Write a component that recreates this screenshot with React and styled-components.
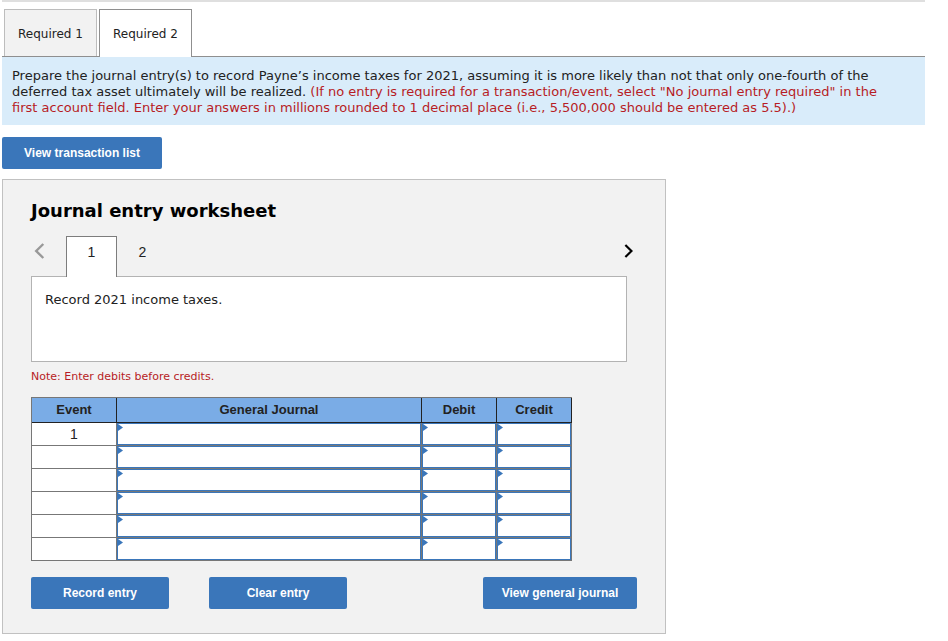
import React, { useState } from "react";
import styled, { createGlobalStyle } from "styled-components";

const GlobalStyle = createGlobalStyle`
  *, *::before, *::after { box-sizing: border-box; }
  body {
    margin: 0;
    background: #fff;
    color: #222;
    font: 13px/16px Verdana, "DejaVu Sans", sans-serif;
  }
  button, input { font: inherit; color: inherit; }
`;

const Page = styled.main`
  padding: 0 23px 7px 2px;
`;

const TabBar = styled.div`
  display: flex;
  align-items: flex-end;
  gap: 2px;
  padding: 7px 2px 0;
  border-top: 2px solid #dfdfdf;
  border-bottom: 1px solid #8f8f8f;
`;

const Tab = styled.button`
  width: 93px;
  height: ${(p) => (p.$active ? 48 : 47)}px;
  margin-bottom: ${(p) => (p.$active ? -1 : 0)}px;
  padding: ${(p) => (p.$active ? 0 : 1)}px 0 0;
  border: 1px solid ${(p) => (p.$active ? "#8f8f8f" : "#bdbdbd")};
  border-bottom: 0;
  background: ${(p) => (p.$active ? "#fff" : "#f2f2f2")};
  font-size: 12px;
  white-space: nowrap;
  cursor: pointer;
`;

const Instructions = styled.p`
  margin: 0 0 12px;
  padding: 11px 32px 9px 10px;
  background: #d9ecfa;
`;

const Hint = styled.span`
  color: #b71c25;
`;

const ActionButton = styled.button`
  width: ${(p) => p.$width}px;
  height: 32px;
  padding: 0;
  border: 0;
  border-radius: 2px;
  background: #3a76ba;
  color: #fff;
  font: bold 12px/16px Arial, "Liberation Sans", sans-serif;
  white-space: nowrap;
  cursor: pointer;
`;

const Worksheet = styled.section`
  max-width: 664px;
  margin-top: 10px;
  padding: 20px 28px 24px;
  border: 1px solid #c1c1c1;
  background: #f2f2f2;
`;

const Title = styled.h2`
  margin: 0 0 14px;
  color: #000;
  font-size: 18px;
  line-height: 22px;
`;

const Pager = styled.div`
  display: flex;
  height: 40px;
`;

const Arrow = styled.button`
  display: flex;
  align-items: center;
  width: 35px;
  height: 30px;
  padding: 0 3px;
  border: 0;
  background: none;
  color: ${(p) => (p.$forward ? "#000" : "#999")};
  ${(p) => p.$forward && "width: 16px; margin-left: auto;"}
`;

const EntryTab = styled.button`
  position: relative;
  width: 51px;
  height: 41px;
  padding: 0 0 10px;
  border: 1px solid ${(p) => (p.$active ? "#7d7d7d" : "transparent")};
  border-bottom: 0;
  background: ${(p) => (p.$active ? "#fff" : "transparent")};
  font: 14px/16px Arial, "Liberation Sans", sans-serif;
  cursor: pointer;
`;

const Description = styled.div`
  max-width: 596px;
  height: 86px;
  padding: 15px 13px;
  border: 1px solid #b3b3b3;
  background: #fff;
`;

const Note = styled.p`
  margin: 7px 0 12px;
  color: #b71c25;
  font-size: 11px;
`;

const Journal = styled.table`
  width: 541px;
  max-width: 100%;
  table-layout: fixed;
  border-collapse: separate;
  border-spacing: 0;
  border: solid #777;
  border-width: 1px 0 0 1px;
  background: #fff;
  font: 14px/16px Arial, "Liberation Sans", sans-serif;
`;

const Column = styled.col`
  width: ${(p) => (p.$width ? `${p.$width}px` : "auto")};
`;

const HeadCell = styled.th`
  height: 25px;
  padding: 0;
  border: solid #222;
  border-width: 0 1px 1px 0;
  background: #7aace6;
  font-size: 13px;
`;

const Cell = styled.td`
  position: relative;
  height: 23px;
  padding: 0;
  border: solid #777;
  border-width: 0 1px 1px 0;
  text-align: center;
`;

const Field = styled.input`
  display: block;
  width: 100%;
  height: 22px;
  padding: 0 8px;
  border: 1px solid #3a76ba;
  border-radius: 0;
  background: #fff;
  outline: 0;
`;

const Marker = styled.svg`
  position: absolute;
  top: 1px;
  left: 1px;
`;

const Actions = styled.div`
  display: flex;
  gap: 40px;
  margin-top: 16px;
  & > :last-child { margin-left: auto; }
`;

const headings = ["Event", "General Journal", "Debit", "Credit"];

function Chevron({ forward }) {
  return (
    <svg width="11" height="16" viewBox="0 0 11 16" fill="none" stroke="currentColor" strokeWidth="2.4" aria-hidden="true">
      <path d={forward ? "M1.5 1.3 8.2 8l-6.7 6.7" : "M9.3 1 2.2 8l7.1 7"} />
    </svg>
  );
}

export default function App() {
  const [required, setRequired] = useState(2);
  const [entry, setEntry] = useState(1);

  return (
    <>
      <GlobalStyle />
      <Page>
        <TabBar role="tablist">
          {[1, 2].map((n) => (
            <Tab key={n} role="tab" aria-selected={required === n} $active={required === n} onClick={() => setRequired(n)}>
              Required {n}
            </Tab>
          ))}
        </TabBar>
        <Instructions>
          Prepare the journal entry(s) to record Payne’s income taxes for 2021, assuming it is more likely than not that
          only one-fourth of the deferred tax asset ultimately will be realized.{" "}
          <Hint>
            (If no entry is required for a transaction/event, select "No journal entry required" in the first account
            field. Enter your answers in millions rounded to 1 decimal place (i.e., 5,500,000 should be entered as
            5.5).)
          </Hint>
        </Instructions>
        <ActionButton $width={160}>View transaction list</ActionButton>
        <Worksheet>
          <Title>Journal entry worksheet</Title>
          <Pager>
            <Arrow aria-label="Previous entry"><Chevron /></Arrow>
            {[1, 2].map((n) => (
              <EntryTab key={n} $active={entry === n} onClick={() => setEntry(n)}>{n}</EntryTab>
            ))}
            <Arrow $forward aria-label="Next entry"><Chevron forward /></Arrow>
          </Pager>
          <Description>Record 2021 income taxes.</Description>
          <Note>Note: Enter debits before credits.</Note>
          <Journal>
            <colgroup>
              <Column $width={85} />
              <Column />
              <Column $width={75} />
              <Column $width={75} />
            </colgroup>
            <thead>
              <tr>{headings.map((h) => <HeadCell key={h} scope="col">{h}</HeadCell>)}</tr>
            </thead>
            <tbody>
              {[1, 2, 3, 4, 5, 6].map((row) => (
                <tr key={row}>
                  <Cell>{row === 1 ? 1 : null}</Cell>
                  {headings.slice(1).map((h) => (
                    <Cell key={h}>
                      <Field aria-label={`${h}, line ${row}`} />
                      <Marker width="5" height="7" viewBox="0 0 5 7" aria-hidden="true">
                        <path d="M0 0 5 3.5 0 7Z" fill="#3a76ba" />
                      </Marker>
                    </Cell>
                  ))}
                </tr>
              ))}
            </tbody>
          </Journal>
          <Actions>
            <ActionButton $width={138}>Record entry</ActionButton>
            <ActionButton $width={138}>Clear entry</ActionButton>
            <ActionButton $width={154}>View general journal</ActionButton>
          </Actions>
        </Worksheet>
      </Page>
    </>
  );
}
